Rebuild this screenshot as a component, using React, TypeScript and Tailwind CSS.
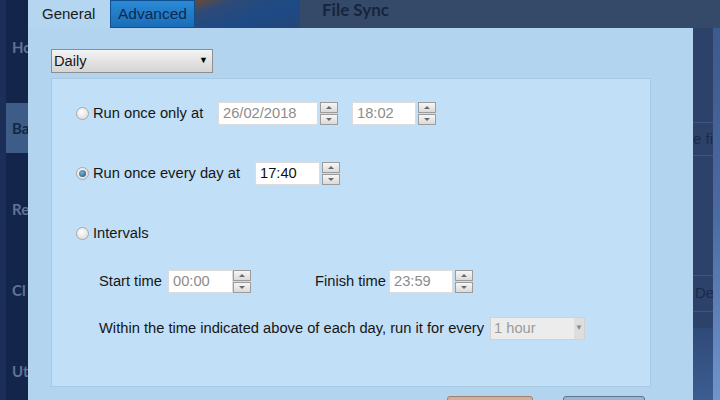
import React from "react";

function Spinner() {
  return (
    <div className="flex flex-col w-[18px] h-[23px] gap-[1px]">
      <div className="flex-1 flex items-center justify-center border border-[#9c9c9c] bg-gradient-to-b from-[#f6f6f6] to-[#dadada]">
        <div className="w-0 h-0 border-l-[3px] border-r-[3px] border-b-[3px] border-l-transparent border-r-transparent border-b-[#6a6a6a]" />
      </div>
      <div className="flex-1 flex items-center justify-center border border-[#9c9c9c] bg-gradient-to-b from-[#f6f6f6] to-[#dadada]">
        <div className="w-0 h-0 border-l-[3px] border-r-[3px] border-t-[3px] border-l-transparent border-r-transparent border-t-[#6a6a6a]" />
      </div>
    </div>
  );
}

function Radio({ checked }: { checked?: boolean }) {
  return (
    <div className="w-[13px] h-[13px] rounded-full border border-[#a8a8a8] bg-[radial-gradient(circle_at_40%_35%,#ffffff,#d4d4d4)] flex items-center justify-center shrink-0">
      {checked && (
        <div className="w-[7px] h-[7px] rounded-full bg-[radial-gradient(circle_at_40%_35%,#7fb2d6,#1f4f78)]" />
      )}
    </div>
  );
}

function TimeBox({ value, width, dim, gap }: { value: string; width: string; dim?: boolean; gap?: boolean }) {
  return (
    <div className="flex items-center">
      <div
        className={`${width} h-[23px] bg-white border border-[#dcdcdc] flex items-center pl-[4px] ${
          dim ? "text-[#8c8c8c]" : "text-[#111]"
        }`}
      >
        {value}
      </div>
      <div className={gap ? "ml-[2px]" : ""}>
        <Spinner />
      </div>
    </div>
  );
}

export default function App() {
  const sidebar = [
    { label: "Ho", active: false },
    { label: "Ba", active: true },
    { label: "Re", active: false },
    { label: "Cl", active: false },
    { label: "Ut", active: false },
  ];

  return (
    <div
      className="w-[720px] h-[400px] flex overflow-hidden bg-[#13254a] text-[14.7px] text-[#161616]"
      style={{ fontFamily: '"Liberation Sans", Arial, sans-serif' }}
    >
      {/* left app sidebar, mostly hidden by the dialog */}
      <div className="w-[28px] shrink-0 flex flex-col bg-[#13254a] border-l-[6px] border-[#1b2f58] overflow-hidden pt-[22px]">
        {sidebar.map((s) => (
          <div
            key={s.label}
            className={`h-[50px] shrink-0 mb-[31px] flex items-center pl-[6px] font-bold text-[15px] whitespace-nowrap ${
              s.active ? "bg-[#3e5c88] text-[#142544] shadow-[-6px_0_0_#9fbde0]" : "text-[#5f7396]"
            }`}
            style={{ fontFamily: "Lato, sans-serif" }}
          >
            {s.label}
          </div>
        ))}
      </div>

      <div className="flex-1 flex flex-col min-h-0">
        {/* tab strip over the app header */}
        <div className="h-[28px] shrink-0 flex bg-[#354a68]">
          <div className="w-[82px] bg-[#b4d6f0] flex items-center pl-[14px] text-[15px] text-[#1b1b1b]">General</div>
          <div className="w-[85px] bg-gradient-to-b from-[#2b8ad6] to-[#1a6db8] border border-[#0f4f8f] flex items-center justify-center text-[15.5px] text-[#0c2a52]">
            Advanced
          </div>
          <div className="w-[105px] bg-[linear-gradient(160deg,#6b4a35_0%,#2d4a78_22%,#1d4a86_60%,#254677_100%)]" />
          <div className="flex-1 pl-[22px] font-bold text-[17px] leading-[19px] text-[#16243e]" style={{ fontFamily: "Lato, sans-serif" }}>
            File Sync
          </div>
        </div>

        <div className="flex-1 min-h-0 flex overflow-hidden">
          {/* dialog body */}
          <div className="w-[665px] bg-[#b2d4ee] pl-[23px] pt-[21px] flex flex-col">
            <div className="w-[162px] h-[24px] shrink-0 border border-[#8e8e8e] bg-gradient-to-b from-[#f4f4f4] to-[#d4d4d4] flex items-center justify-between pl-[2px] pr-[4px]">
              <span>Daily</span>
              <span className="text-[9px] text-black">▼</span>
            </div>

            <div className="mt-[5px] w-[600px] h-[309px] shrink-0 bg-[#c1dff6] border border-[#a9c9e3] pl-[24px] pt-[22px]">
              <div className="h-[24px] flex items-center">
                <Radio />
                <span className="ml-[4px] w-[125px]">Run once only at</span>
                <TimeBox value="26/02/2018" width="w-[100px]" dim gap />
                <div className="ml-[14px]">
                  <TimeBox value="18:02" width="w-[64px]" dim gap />
                </div>
              </div>

              <div className="h-[24px] mt-[36px] flex items-center">
                <Radio checked />
                <span className="ml-[4px] w-[162px]">Run once every day at</span>
                <TimeBox value="17:40" width="w-[65px]" gap />
              </div>

              <div className="h-[24px] mt-[36px] flex items-center">
                <Radio />
                <span className="ml-[4px]">Intervals</span>
              </div>

              <div className="h-[24px] mt-[24px] flex items-center pl-[23px]">
                <span className="w-[69px]">Start time</span>
                <TimeBox value="00:00" width="w-[65px]" dim />
                <span className="ml-[64px] w-[74px]">Finish time</span>
                <TimeBox value="23:59" width="w-[64px]" dim gap />
              </div>

              <div className="h-[24px] mt-[23px] flex items-center pl-[23px]">
                <span className="w-[391px] whitespace-nowrap">Within the time indicated above of each day, run it for every</span>
                <div className="w-[95px] h-[23px] border border-[#d2d2d2] bg-[#ececec] flex items-center justify-between pl-[3px] text-[#9b9b9b]">
                  <span>1 hour</span>
                  <span className="h-full w-[10px] bg-[#dedede] flex items-center justify-center text-[8px] text-[#8a8a8a]">▼</span>
                </div>
              </div>
            </div>

            <div className="flex shrink-0 mt-[9px]">
              <div className="ml-[396px] w-[86px] h-[10px] rounded-t-[3px] border border-[#9f8272] bg-[#d0b09a]" />
              <div className="ml-[30px] w-[82px] h-[10px] rounded-t-[3px] border border-[#5d7391] bg-[#9db4cf]" />
            </div>
          </div>

          {/* right side of the app, behind the dialog */}
          <div className="flex-1 flex bg-[#2c4269]">
            <div className="w-[20px] flex flex-col overflow-hidden">
              <div className="h-[94px] shrink-0" />
              <div className="h-[34px] shrink-0 border-y border-[#3f5680] flex items-center text-[#1b2a48] whitespace-nowrap text-[15px]">
                e fil
              </div>
              <div className="h-[119px] shrink-0" />
              <div className="h-[37px] shrink-0 border-y border-[#3f5680] flex items-center text-[#1b2a48] whitespace-nowrap pl-[2px] text-[15px]">
                De
              </div>
              <div className="flex-1 mt-[16px] bg-gradient-to-b from-[#2f4a78] to-[#3c5d92]" />
            </div>
            <div className="flex-1 bg-gradient-to-b from-[#3b5a8e] via-[#4a6aa2] to-[#7194cc]" />
          </div>
        </div>
      </div>
    </div>
  );
}
